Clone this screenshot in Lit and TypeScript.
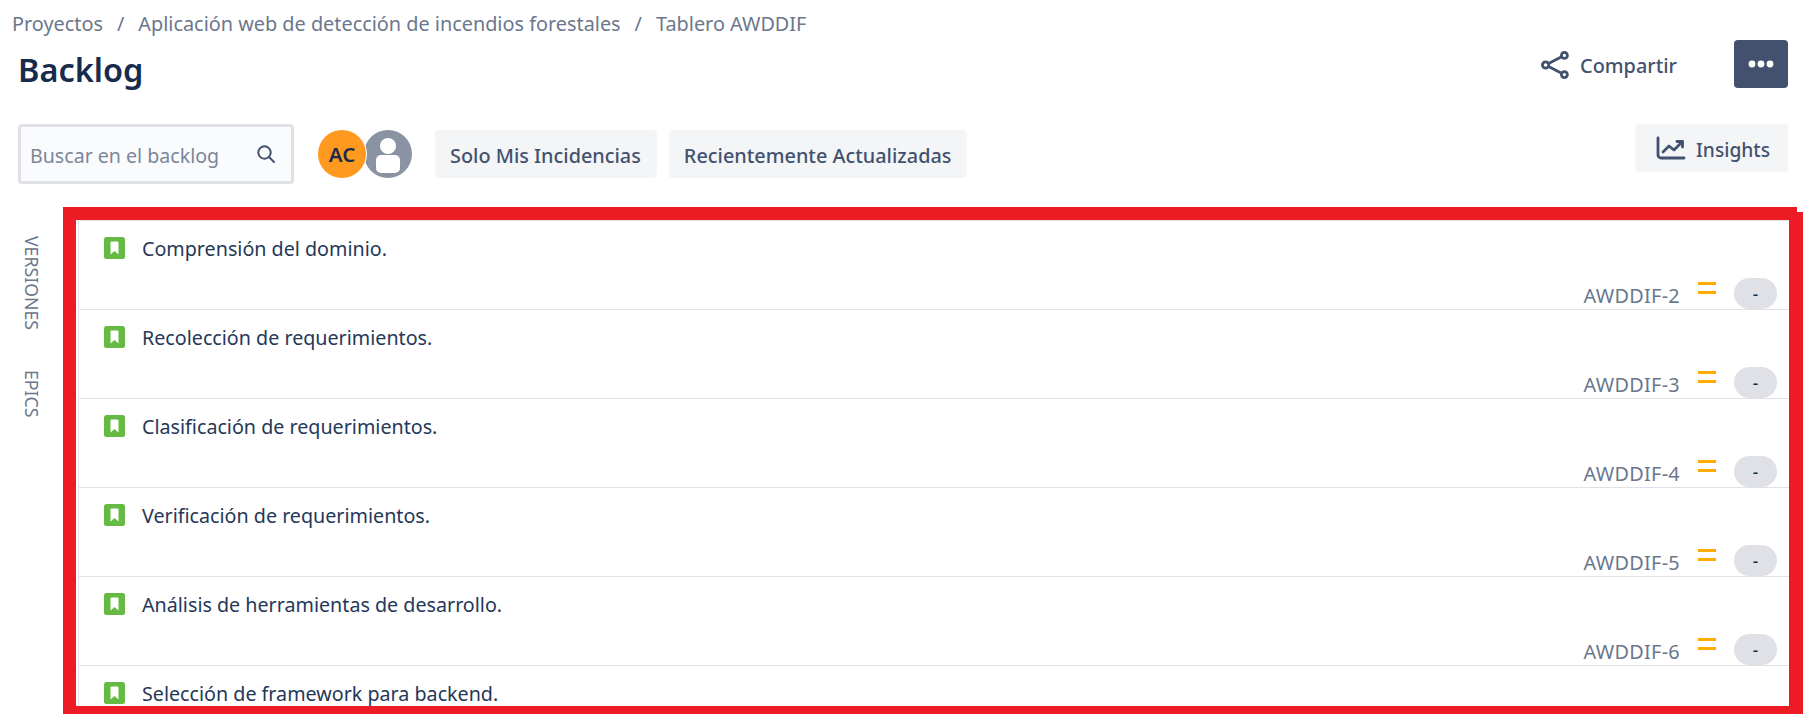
import {html, css, LitElement} from 'lit';
import {customElement} from 'lit/decorators.js';

// the sixth row runs past the bottom of the window, so only its title shows
const issues = [
  {title: 'Comprensión del dominio.', key: 'AWDDIF-2'},
  {title: 'Recolección de requerimientos.', key: 'AWDDIF-3'},
  {title: 'Clasificación de requerimientos.', key: 'AWDDIF-4'},
  {title: 'Verificación de requerimientos.', key: 'AWDDIF-5'},
  {title: 'Análisis de herramientas de desarrollo.', key: 'AWDDIF-6'},
  {title: 'Selección de framework para backend.', key: ''},
];

@customElement('app-root')
export class AppRoot extends LitElement {
  static styles = css`
    :host {
      display: block;
      position: relative;
      height: 714px;
      overflow: hidden;
      background: #fff;
      font-family: "Noto Sans", "Open Sans", sans-serif;
      font-size: 19.85px;
      color: #253858;
    }

    .crumbs {
      display: flex;
      gap: 14px;
      height: 24px;
      padding: 12px 0 0 12px;
      line-height: 24px;
      color: #6b778c;
    }

    .head {
      display: flex;
      align-items: center;
      height: 48px;
      margin-top: 4px;
      padding: 0 25px 0 18px;
    }

    h1 {
      flex: 1;
      margin: 12px 0 0;
      font-size: 32.5px;
      font-weight: 600;
      line-height: 42px;
      color: #172b4d;
    }

    .share {
      display: flex;
      align-items: center;
      gap: 11px;
      margin: 2px 57px 0 0;
      font-weight: 500;
      color: #42526e;
    }

    .more {
      display: flex;
      align-items: center;
      justify-content: center;
      width: 54px;
      height: 48px;
      border-radius: 4px;
      background: #42526e;
    }

    .toolbar {
      display: flex;
      align-items: flex-start;
      height: 60px;
      margin-top: 36px;
      padding: 0 25px 0 18px;
    }

    .search {
      box-sizing: border-box;
      display: flex;
      align-items: center;
      justify-content: space-between;
      width: 276px;
      height: 60px;
      padding: 2px 15px 0 9px;
      border: 3px solid #dfe1e6;
      border-radius: 4px;
      background: #fafbfc;
      font-size: 19.6px;
      color: #7a869a;
    }

    .search svg {
      margin-top: -2px;
    }

    .avatars {
      display: flex;
      margin: 6px 23px 0 24px;
    }

    .avatar {
      display: flex;
      align-items: center;
      justify-content: center;
      width: 48px;
      height: 48px;
      border-radius: 50%;
    }

    .ac {
      position: relative;
      background: #ff991f;
      font-size: 20.5px;
      font-weight: 600;
      color: #172b4d;
      box-shadow: 0 0 0 1px #fff;
    }

    .anon {
      margin-left: -2px;
      background: #8993a4;
      overflow: hidden;
    }

    .btn {
      box-sizing: border-box;
      display: flex;
      align-items: center;
      height: 48px;
      margin: 6px 12px 0 0;
      padding: 2px 16px 0 15px;
      border-radius: 4px;
      background: #f4f5f7;
      font-weight: 500;
      color: #42526e;
    }

    .insights {
      gap: 10px;
      margin: 0 0 0 auto;
      padding: 2px 18px 0 21px;
      font-size: 19.2px;
    }

    .insights svg {
      margin-top: -2px;
    }

    .body {
      display: flex;
      margin-top: 36px;
    }

    .side {
      display: flex;
      flex-direction: column;
      align-items: flex-start;
      gap: 40px;
      box-sizing: border-box;
      width: 78px;
      padding: 16px 0 0 23px;
      color: #6b778c;
    }

    .side span {
      writing-mode: vertical-rl;
      font-size: 17.7px;
      line-height: 18px;
    }

    .list {
      box-sizing: border-box;
      width: 1711px;
      border-top: 1px solid #dfe1e6;
      border-left: 1px solid #dfe1e6;
    }

    .row {
      box-sizing: border-box;
      display: grid;
      grid-template-columns: 21px 1fr auto auto auto;
      grid-template-rows: 1fr auto;
      height: 89px;
      padding: 16px 12px 0 25px;
      border-bottom: 1px solid #dfe1e6;
    }

    .story {
      width: 21px;
      height: 22px;
    }

    .title {
      grid-column: 2 / 6;
      margin-left: 17px;
      font-size: 19.7px;
      line-height: 24px;
    }

    .key {
      grid-column: 3;
      grid-row: 2;
      align-self: end;
      line-height: 26px;
      letter-spacing: 0.3px;
      color: #6b778c;
    }

    .prio {
      grid-column: 4;
      grid-row: 2;
      box-sizing: border-box;
      width: 18px;
      height: 12px;
      margin: 4px 18px 0 18px;
      border-top: 3px solid #ffab00;
      border-bottom: 3px solid #ffab00;
    }

    .est {
      grid-column: 5;
      grid-row: 2;
      display: flex;
      align-items: center;
      justify-content: center;
      width: 43px;
      height: 31px;
      border-radius: 16px;
      background: #dfe1e6;
      font-size: 17px;
      font-weight: 500;
      color: #172b4d;
    }

    .frame {
      position: absolute;
      left: 63px;
      top: 212px;
      width: 1740px;
      height: 502px;
      box-sizing: border-box;
      border: solid #ed1c24;
      border-width: 8px 14px 8px 13px;
      pointer-events: none;
    }

    .frame::before {
      content: "";
      position: absolute;
      left: -13px;
      top: -13px;
      width: 1734px;
      height: 5px;
      background: #ed1c24;
    }
  `;

  render() {
    return html`
      <div class="crumbs">
        <span>Proyectos</span><span>/</span>
        <span>Aplicación web de detección de incendios forestales</span><span>/</span>
        <span>Tablero AWDDIF</span>
      </div>
      <div class="head">
        <h1>Backlog</h1>
        <div class="share">
          <svg width="28" height="28" viewBox="0 0 28 28" fill="none" stroke="#42526e" stroke-width="2.8">
            <circle cx="4.6" cy="14" r="3.2"/><circle cx="23.4" cy="4.4" r="3"/><circle cx="23.4" cy="23.6" r="3"/>
            <path d="M7.6 12.4 20.6 5.8M7.6 15.6 20.6 22.2"/>
          </svg>
          Compartir
        </div>
        <div class="more">
          <svg width="26" height="8" viewBox="0 0 26 8" fill="#fff">
            <circle cx="4" cy="4" r="3.4"/><circle cx="13" cy="4" r="3.4"/><circle cx="22" cy="4" r="3.4"/>
          </svg>
        </div>
      </div>
      <div class="toolbar">
        <div class="search">
          <span>Buscar en el backlog</span>
          <svg width="20" height="20" viewBox="0 0 20 20" fill="none" stroke="#42526e" stroke-width="2">
            <circle cx="8.5" cy="8.5" r="6.2"/><path d="M13 13l5 5" stroke-linecap="round"/>
          </svg>
        </div>
        <div class="avatars">
          <div class="avatar ac">AC</div>
          <div class="avatar anon">
            <svg width="48" height="48" viewBox="0 0 48 48" fill="#fff">
              <circle cx="24" cy="16" r="8"/><rect x="12" y="25" width="24" height="18" rx="5"/>
            </svg>
          </div>
        </div>
        <div class="btn">Solo Mis Incidencias</div>
        <div class="btn">Recientemente Actualizadas</div>
        <div class="btn insights">
          <svg width="30" height="24" viewBox="0 0 30 24" fill="none" stroke="#42526e" stroke-width="2.8" stroke-linecap="round" stroke-linejoin="round">
            <path d="M2 2v17a3 3 0 0 0 3 3h23"/>
            <path d="M7 16l6-6 5 4 8-8"/><path d="M21 5.5h5.5V11"/>
          </svg>
          Insights
        </div>
      </div>
      <div class="body">
        <div class="side"><span>VERSIONES</span><span>EPICS</span></div>
        <div class="list">
          ${issues.map(i => html`
            <div class="row">
              <svg class="story" viewBox="0 0 21 22">
                <rect width="21" height="22" rx="2.5" fill="#65ba43"/>
                <path d="M6.5 5.5a1 1 0 0 1 1-1h6a1 1 0 0 1 1 1v12l-4-3.4-4 3.4z" fill="#fff"/>
              </svg>
              <div class="title">${i.title}</div>
              ${i.key ? html`
                <div class="key">${i.key}</div>
                <div class="prio"></div>
                <div class="est">-</div>
              ` : ''}
            </div>
          `)}
        </div>
      </div>
      <div class="frame"></div>
    `;
  }
}
